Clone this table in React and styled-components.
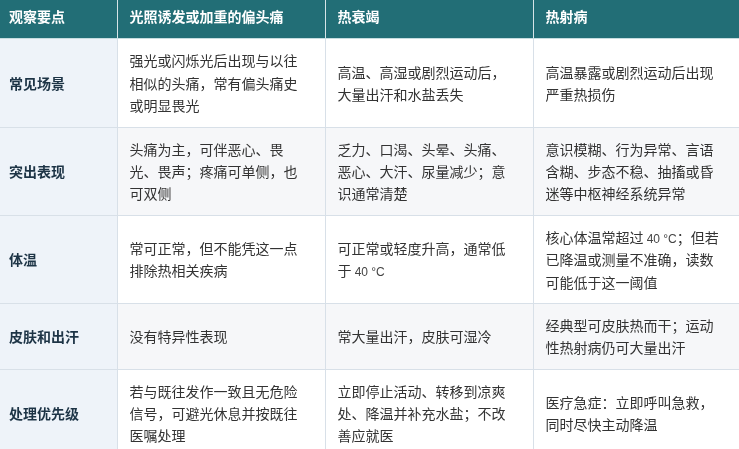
import React from 'react';
import styled, { createGlobalStyle } from 'styled-components';

const GlobalStyle = createGlobalStyle`
  html, body {
    margin: 0;
    padding: 0;
    background: #fff;
    overflow: hidden;
  }
  body {
    font-family: "Noto Sans CJK SC", "Liberation Sans", sans-serif;
  }
`

const Table = styled.table`
  width: 739px;
  table-layout: fixed;
  border-collapse: collapse;
  font-size: 14px;
  line-height: 1.6;
  color: #333;
  will-change: transform;
`

const Col = styled.col`
  width: ${p => p.$w}px;
`

const HeadCell = styled.th`
  background: #226e76;
  color: #fff;
  font-weight: bold;
  text-align: left;
  padding: 5px 12px 11px;
  padding-left: ${p => (p.$first ? '9px' : '12px')};
  border-left: ${p => (p.$first ? 'none' : '1px solid #d6e4e7')};
  border-bottom: 1px solid #c6dde0;
  vertical-align: middle;
`

const Row = styled.tr`
  background: ${p => (p.$striped ? '#f6f7f9' : '#fff')};
  border-bottom: 1px solid #d8e0e8;
`

const LabelCell = styled.td`
  background: #eef3f9;
  color: #1d3446;
  font-weight: bold;
  padding: 10px 8px 10px 9px;
  vertical-align: middle;
`

const Cell = styled.td`
  padding: 10px 16px 10px 12px;
  border-left: 1px solid #d8e0e8;
  vertical-align: middle;
`

const Num = styled.span`
  font-family: "Liberation Sans", sans-serif;
  font-size: 12px;
  line-height: 1;
  color: #444;
`

const columns = ['观察要点', '光照诱发或加重的偏头痛', '热衰竭', '热射病']
const widths = [117, 208, 208, 206]

const rows = [
  {
    label: '常见场景',
    cells: [
      '强光或闪烁光后出现与以往相似的头痛，常有偏头痛史或明显畏光',
      '高温、高湿或剧烈运动后，大量出汗和水盐丢失',
      '高温暴露或剧烈运动后出现严重热损伤',
    ],
  },
  {
    label: '突出表现',
    cells: [
      '头痛为主，可伴恶心、畏光、畏声；疼痛可单侧，也可双侧',
      '乏力、口渴、头晕、头痛、恶心、大汗、尿量减少；意识通常清楚',
      '意识模糊、行为异常、言语含糊、步态不稳、抽搐或昏迷等中枢神经系统异常',
    ],
  },
  {
    label: '体温',
    cells: [
      '常可正常，但不能凭这一点排除热相关疾病',
      '可正常或轻度升高，通常低于 40 °C',
      '核心体温常超过 40 °C；但若已降温或测量不准确，读数可能低于这一阈值',
    ],
  },
  {
    label: '皮肤和出汗',
    cells: [
      '没有特异性表现',
      '常大量出汗，皮肤可湿冷',
      '经典型可皮肤热而干；运动性热射病仍可大量出汗',
    ],
  },
  {
    label: '处理优先级',
    cells: [
      '若与既往发作一致且无危险信号，可避光休息并按既往医嘱处理',
      '立即停止活动、转移到凉爽处、降温并补充水盐；不改善应就医',
      '医疗急症：立即呼叫急救，同时尽快主动降温',
    ],
  },
]

// latin numbers in the source render narrower than the CJK text
const renderText = text =>
  text.split(/(40 °C)/).map((part, i) =>
    part === '40 °C' ? <Num key={i}>{part}</Num> : part
  )

const App = () => {
  return (
    <>
      <GlobalStyle />
      <Table lang="zh-CN">
        <colgroup>
          {widths.map((w, i) => <Col key={i} $w={w} />)}
        </colgroup>
        <thead>
          <tr>
            {columns.map((c, i) => (
              <HeadCell key={c} $first={i === 0}>{c}</HeadCell>
            ))}
          </tr>
        </thead>
        <tbody>
          {rows.map((r, i) => (
            <Row key={r.label} $striped={i % 2 === 1}>
              <LabelCell>{r.label}</LabelCell>
              {r.cells.map((text, j) => (
                <Cell key={j}>{renderText(text)}</Cell>
              ))}
            </Row>
          ))}
        </tbody>
      </Table>
    </>
  )
}

export default App;
